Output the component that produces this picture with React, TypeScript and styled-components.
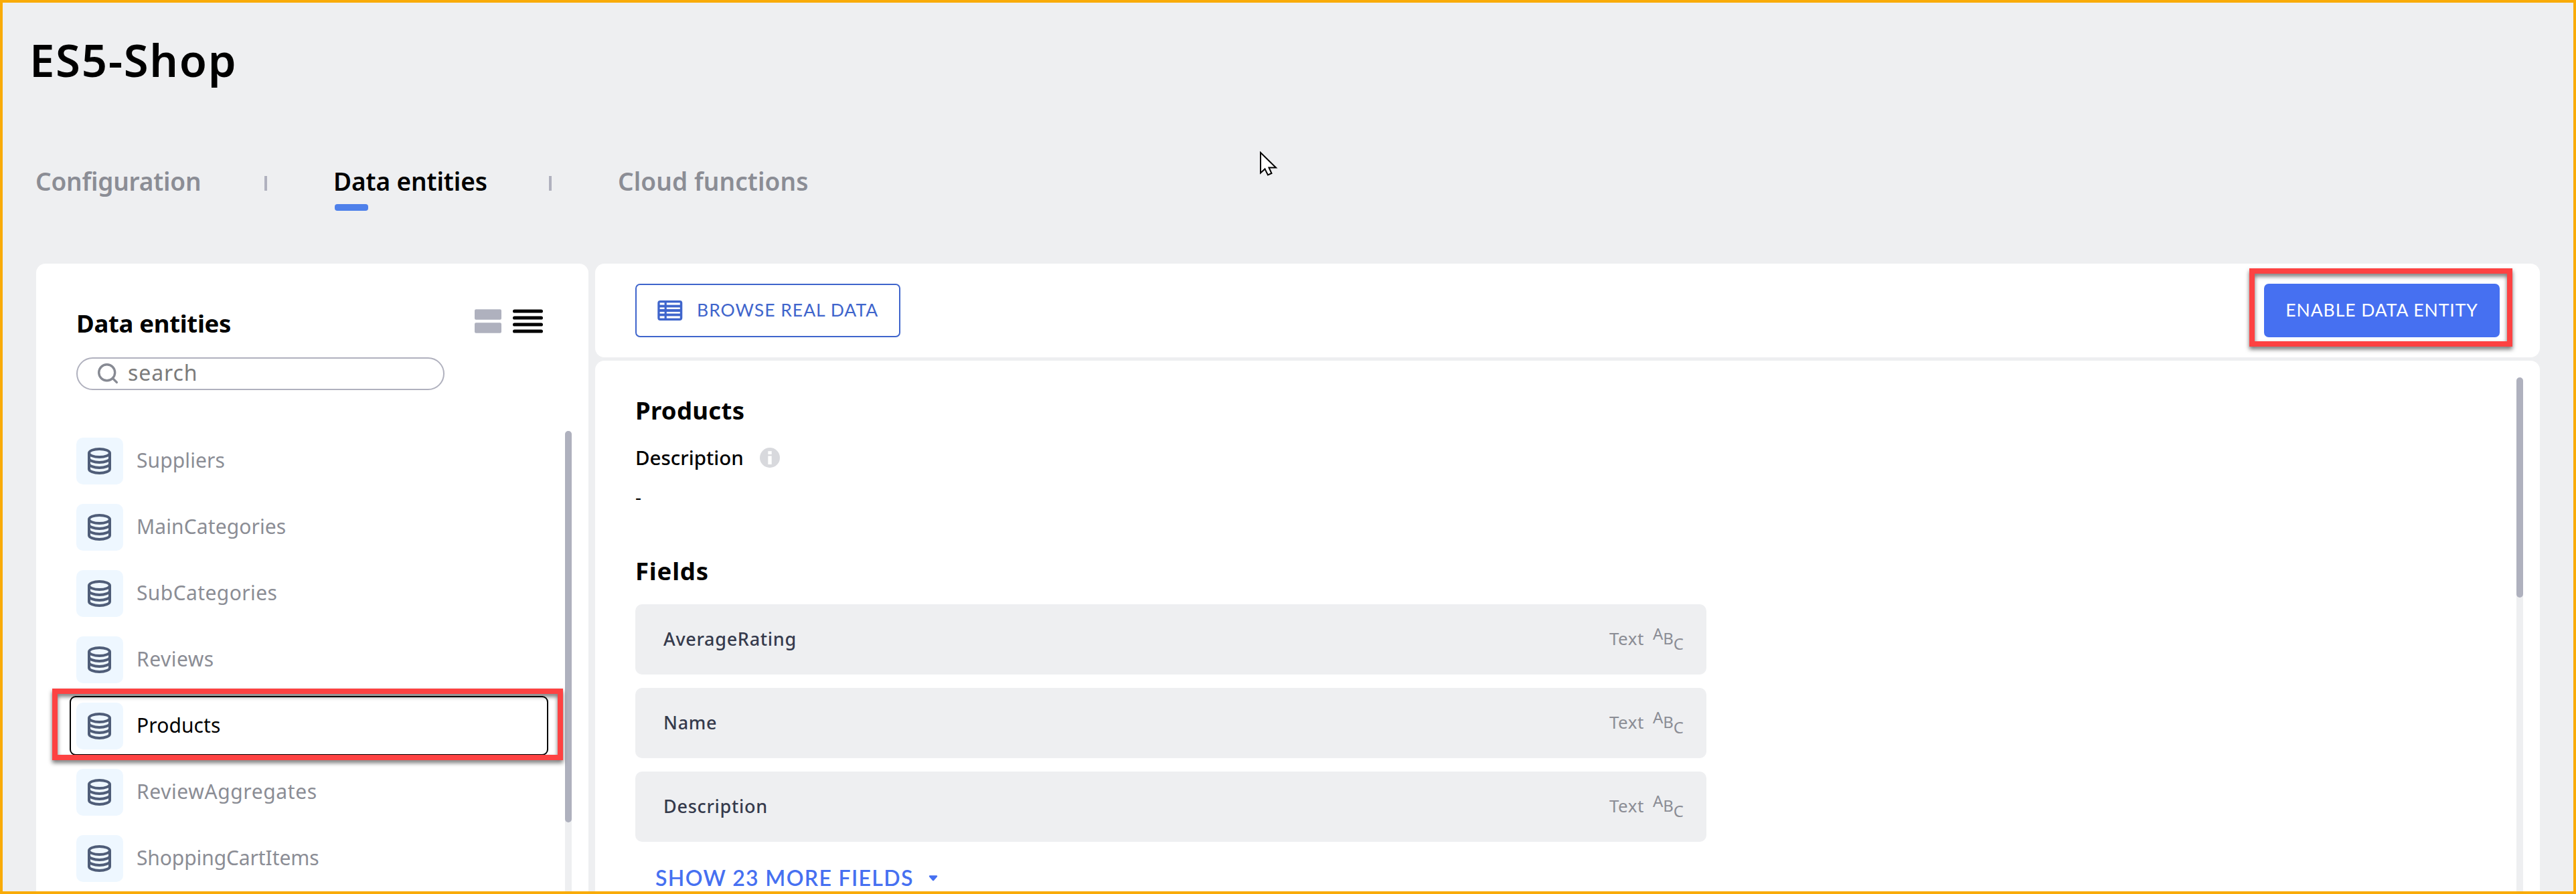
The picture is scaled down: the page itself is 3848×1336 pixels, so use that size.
import React from "react";
import styled, { createGlobalStyle, css } from "styled-components";

const color = {
  page: "#eeeff1",
  frame: "#f9ab08",
  muted: "#8b8d95",
  scroll: "#afb1be",
  primary: "#4670f1",
  outline: "#3f65cc",
  callout: "#fd4242",
  ink: "#353a4c",
};

const GlobalStyle = createGlobalStyle`
  * { box-sizing: border-box; }
  body {
    margin: 0;
    background: ${color.page};
    font-family: "Noto Sans", "Open Sans", sans-serif;
    color: #000;
  }
  h1, h2, p { margin: 0; }
  svg { display: block; flex: none; }
`;

const Frame = styled.div`
  position: relative;
  display: flex;
  flex-direction: column;
  width: 3848px;
  height: 1336px;
  padding: 45px 50px 0;
  border: 4px solid ${color.frame};
  background: ${color.page};
  overflow: hidden;
`;

const Title = styled.h1`
  margin-left: -10px;
  font-size: 67px;
  line-height: 80px;
  font-weight: 600;
  letter-spacing: 1.7px;
`;

const Tabs = styled.nav`
  display: flex;
  height: 69px;
  margin: 117px 0 79px -1px;
`;

const Tab = styled.div<{ $active?: boolean; $width: number; $tracking?: number }>`
  width: ${(p) => p.$width}px;
  font-size: 37px;
  line-height: 50px;
  font-weight: 560;
  letter-spacing: ${(p) => p.$tracking ?? 0}px;
  white-space: nowrap;
  color: ${(p) => (p.$active ? "#000" : color.muted)};
  ${(p) =>
    p.$active &&
    css`
      &::after {
        content: "";
        display: block;
        width: 50px;
        height: 10px;
        margin: 9px 0 0 2px;
        border-radius: 4px;
        background: #4e80ea;
      }
    `}
`;

const TabDivider = styled.span`
  width: 4px;
  height: 22px;
  margin: 17px 99px 0 0;
  background: #b0b1be;
`;

const Body = styled.div`
  display: flex;
  flex: 1;
  gap: 10px;
  min-height: 0;
`;

const Sidebar = styled.aside`
  display: flex;
  flex-direction: column;
  width: 825px;
  padding-top: 64px;
  border-radius: 14px 14px 0 0;
  background: #fff;
`;

const SidebarHeader = styled.div`
  display: flex;
  justify-content: space-between;
  height: 50px;
  padding: 0 68px 0 60px;
`;

const Heading = styled.h2<{ $tracking?: number }>`
  font-size: 36.5px;
  line-height: 50px;
  font-weight: 700;
  letter-spacing: ${(p) => p.$tracking ?? 0}px;
`;

const ViewSwitch = styled.div`
  display: flex;
  gap: 17px;
  padding-top: 4px;
`;

const SearchBox = styled.label`
  display: flex;
  align-items: center;
  gap: 14px;
  flex: none;
  width: 550px;
  height: 49px;
  margin: 26px 0 61px 60px;
  padding: 0 30px 1px;
  border: 2px solid #b0b1be;
  border-radius: 25px;
`;

const SearchText = styled.span`
  padding-bottom: 3px;
  font-size: 32px;
  line-height: 40px;
  letter-spacing: 0.9px;
  color: #7b7b7b;
`;

const ListArea = styled.div`
  display: flex;
  flex: 1;
  gap: 25px;
  min-height: 0;
  padding-left: 50px;
`;

const EntityList = styled.div`
  display: flex;
  flex-direction: column;
  gap: 9px;
  width: 715px;
`;

const EntityRow = styled.div<{ $selected?: boolean }>`
  position: relative;
  display: flex;
  align-items: center;
  gap: 20px;
  flex: none;
  height: 90px;
  padding: 0 10px;
  color: ${(p) => (p.$selected ? "#000" : color.muted)};
  ${(p) =>
    p.$selected &&
    css`
      &::after {
        content: "";
        position: absolute;
        inset: 0 0 1px;
        border: 2px solid #000;
        border-radius: 9px;
      }
    `}
`;

const EntityTile = styled.span`
  display: flex;
  align-items: center;
  justify-content: center;
  width: 70px;
  height: 70px;
  padding-right: 1px;
  border-radius: 10px;
  background: #eef7ff;
`;

const EntityName = styled.span<{ $tracking: number }>`
  padding-bottom: 2px;
  font-size: 30px;
  line-height: 40px;
  letter-spacing: ${(p) => p.$tracking}px;
`;

const Callout = styled.div<{ $x: number; $y: number; $w: number; $h: number }>`
  position: absolute;
  z-index: 1;
  left: ${(p) => p.$x}px;
  top: ${(p) => p.$y}px;
  width: ${(p) => p.$w}px;
  height: ${(p) => p.$h}px;
  border: 8px solid ${color.callout};
  filter: drop-shadow(0 4px 3px rgba(0, 0, 0, 0.55));
`;

const ScrollTrack = styled.div<{ $top?: number }>`
  width: 10px;
  margin-top: ${(p) => p.$top ?? 0}px;
  border-radius: 5px 5px 0 0;
  background: ${color.page};
`;

const ScrollThumb = styled.div<{ $length: number }>`
  height: ${(p) => p.$length}px;
  border-radius: 5px;
  background: ${color.scroll};
`;

const Main = styled.main`
  display: flex;
  flex-direction: column;
  flex: 1;
  gap: 5px;
`;

const Toolbar = styled.div`
  display: flex;
  align-items: center;
  justify-content: space-between;
  flex: none;
  height: 140px;
  padding: 0 60px;
  border-radius: 14px;
  background: #fff;
`;

const ButtonSlot = styled.div`
  position: relative;
`;

const Button = styled.button<{ $filled?: boolean; $width: number }>`
  display: flex;
  align-items: center;
  gap: 21px;
  justify-content: ${(p) => (p.$filled ? "center" : "flex-start")};
  width: ${(p) => p.$width}px;
  height: 80px;
  padding: 0 0 0 ${(p) => (p.$filled ? 0 : 31)}px;
  border: 2px solid ${(p) => (p.$filled ? color.primary : color.outline)};
  border-radius: 7px;
  background: ${(p) => (p.$filled ? color.primary : "#fff")};
  color: ${(p) => (p.$filled ? "#fff" : color.outline)};
  font-family: Lato, "Noto Sans", sans-serif;
  font-size: 26.5px;
  line-height: 40px;
  letter-spacing: ${(p) => (p.$filled ? 0.95 : 1)}px;
  white-space: nowrap;
`;

const ButtonLabel = styled.span`
  padding-bottom: 3px;
`;

const Content = styled.section`
  display: flex;
  justify-content: space-between;
  flex: 1;
  min-height: 0;
  padding: 0 25px 0 60px;
  border-radius: 14px 14px 0 0;
  background: #fff;
`;

const Details = styled.div`
  display: flex;
  flex-direction: column;
  width: 1600px;
  padding-top: 49px;
`;

const DescriptionLabel = styled.div`
  display: flex;
  align-items: center;
  gap: 24px;
  height: 40px;
  margin-top: 26px;
  font-size: 29.5px;
  line-height: 40px;
  font-weight: 500;
`;

const DescriptionText = styled.p`
  margin: 18px 0 66px;
  font-size: 28px;
  line-height: 40px;
`;

const FieldList = styled.div`
  display: flex;
  flex-direction: column;
  flex: none;
  gap: 20px;
  margin: 25px 0 32px;
`;

const FieldRow = styled.div`
  display: flex;
  align-items: center;
  justify-content: space-between;
  height: 105px;
  padding: 0 34px 0 42px;
  border-radius: 10px;
  background: ${color.page};
`;

const FieldName = styled.span`
  padding-bottom: 1px;
  font-size: 27px;
  line-height: 40px;
  font-weight: 500;
  letter-spacing: 0.7px;
  color: ${color.ink};
`;

const FieldType = styled.span`
  display: flex;
  align-items: center;
  gap: 13px;
  padding-bottom: 3px;
  font-size: 26px;
  line-height: 40px;
  letter-spacing: 0.5px;
  color: ${color.muted};
`;

const AbcMark = styled.span`
  display: flex;
  align-items: flex-start;
  height: 39px;
  font-size: 24px;
  line-height: 24px;
  letter-spacing: 0;
`;

const AbcLetter = styled.span<{ $drop: number }>`
  padding-top: ${(p) => p.$drop}px;
`;

const ShowMore = styled.div`
  display: flex;
  align-items: center;
  gap: 22px;
  flex: none;
  margin-left: 30px;
  font-family: Lato, "Noto Sans", sans-serif;
  font-size: 32px;
  line-height: 44px;
  font-weight: 600;
  letter-spacing: 1.35px;
  color: ${color.primary};
`;

const Pointer = styled.svg`
  position: absolute;
  left: 1877px;
  top: 222px;
`;

const DatabaseIcon = () => (
  <svg width="35" height="40" viewBox="0 0 35 40" fill="none" stroke="#4f5d78" strokeWidth="4">
    <ellipse cx="17.5" cy="8" rx="15.5" ry="6" />
    <path d="M2 8V32C2 35.3 9 38 17.5 38S33 35.3 33 32V8" />
    <path d="M2 16C2 19.3 9 22 17.5 22S33 19.3 33 16" />
    <path d="M2 24C2 27.3 9 30 17.5 30S33 27.3 33 24" />
  </svg>
);

const CardsIcon = () => (
  <svg width="40" height="36" viewBox="0 0 40 36" fill="#afb1be">
    <rect y="0.3" width="40" height="15.4" rx="2" />
    <rect y="20.3" width="40" height="15.4" rx="2" />
  </svg>
);

const LinesIcon = () => (
  <svg width="45" height="36" viewBox="0 0 45 36" fill="#000">
    {[0.4, 10.4, 20.4, 30.4].map((y) => (
      <rect key={y} y={y} width="45" height="5.2" rx="2.6" />
    ))}
  </svg>
);

const SearchIcon = () => (
  <svg width="31" height="31" viewBox="0 0 31 31" fill="none" stroke="#878a93" strokeWidth="3.4" strokeLinecap="round">
    <circle cx="13.7" cy="13.7" r="12" />
    <path d="M22.4 22.4L28.4 28.4" />
  </svg>
);

const TableIcon = () => (
  <svg width="38" height="30" viewBox="0 0 38 30">
    <rect x="0.3" width="37" height="30" rx="4" fill="#3f65cc" />
    <g fill="#fff">
      {[[3.4, 3.2], [10.4, 2.6], [17, 2.6], [23.4, 3.2]].map(([y, h]) => (
        <React.Fragment key={y}>
          <rect x="3.6" y={y} width="7" height={h} />
          <rect x="13.8" y={y} width="20" height={h} />
        </React.Fragment>
      ))}
    </g>
  </svg>
);

const InfoIcon = () => (
  <svg width="30" height="30" viewBox="0 0 30 30">
    <circle cx="15" cy="15" r="15" fill="#d8d9dd" />
    <rect x="12.3" y="5.2" width="5.4" height="4.8" fill="#fff" />
    <rect x="12.3" y="12.4" width="5.4" height="12.6" fill="#fff" />
  </svg>
);

const CaretIcon = () => (
  <svg width="14" height="9" viewBox="0 0 14 9">
    <path d="M2 1.5H12L7 7.2Z" fill="#4670f1" stroke="#4670f1" strokeWidth="2.4" strokeLinejoin="round" />
  </svg>
);

const entities = [
  { name: "Suppliers", tracking: 0.1 },
  { name: "MainCategories", tracking: 0.1 },
  { name: "SubCategories", tracking: 0.4 },
  { name: "Reviews", tracking: 0.5 },
  { name: "Products", tracking: 0.1, selected: true },
  { name: "ReviewAggregates", tracking: 0.6 },
  { name: "ShoppingCartItems", tracking: -0.1 },
];

const fields = ["AverageRating", "Name", "Description"];

export default function App() {
  return (
    <>
      <GlobalStyle />
      <Frame>
        <Title>ES5-Shop</Title>
        <Tabs>
          <Tab $width={342} $tracking={-0.2}>Configuration</Tab>
          <TabDivider />
          <Tab $width={322} $tracking={-0.1} $active>Data entities</Tab>
          <TabDivider />
          <Tab $width={300} $tracking={0.1}>Cloud functions</Tab>
        </Tabs>
        <Body>
          <Sidebar>
            <SidebarHeader>
              <Heading $tracking={-0.3}>Data entities</Heading>
              <ViewSwitch>
                <CardsIcon />
                <LinesIcon />
              </ViewSwitch>
            </SidebarHeader>
            <SearchBox>
              <SearchIcon />
              <SearchText>search</SearchText>
            </SearchBox>
            <ListArea>
              <EntityList>
                {entities.map((e) => (
                  <EntityRow key={e.name} $selected={e.selected}>
                    <EntityTile>
                      <DatabaseIcon />
                    </EntityTile>
                    <EntityName $tracking={e.tracking}>{e.name}</EntityName>
                    {e.selected && <Callout $x={-26} $y={-11} $w={763} $h={107} />}
                  </EntityRow>
                ))}
              </EntityList>
              <ScrollTrack>
                <ScrollThumb $length={585} />
              </ScrollTrack>
            </ListArea>
          </Sidebar>
          <Main>
            <Toolbar>
              <Button $width={396}>
                <TableIcon />
                <ButtonLabel>BROWSE REAL DATA</ButtonLabel>
              </Button>
              <ButtonSlot>
                <Button $filled $width={352}>
                  <ButtonLabel>ENABLE DATA ENTITY</ButtonLabel>
                </Button>
                <Callout $x={-22} $y={-23} $w={393} $h={117} />
              </ButtonSlot>
            </Toolbar>
            <Content>
              <Details>
                <Heading $tracking={0.3}>Products</Heading>
                <DescriptionLabel>
                  Description
                  <InfoIcon />
                </DescriptionLabel>
                <DescriptionText>-</DescriptionText>
                <Heading $tracking={0.8}>Fields</Heading>
                <FieldList>
                  {fields.map((name) => (
                    <FieldRow key={name}>
                      <FieldName>{name}</FieldName>
                      <FieldType>
                        Text
                        <AbcMark>
                          <AbcLetter $drop={0}>A</AbcLetter>
                          <AbcLetter $drop={7.5}>B</AbcLetter>
                          <AbcLetter $drop={15}>C</AbcLetter>
                        </AbcMark>
                      </FieldType>
                    </FieldRow>
                  ))}
                </FieldList>
                <ShowMore>
                  SHOW 23 MORE FIELDS
                  <CaretIcon />
                </ShowMore>
              </Details>
              <ScrollTrack $top={25}>
                <ScrollThumb $length={329} />
              </ScrollTrack>
            </Content>
          </Main>
        </Body>
        <Pointer width="30" height="40" viewBox="0 0 30 40">
          <path
            d="M2 2V32.5L8.5 26.5L13 35.5L18.5 33L14.5 24.5H25Z"
            fill="#fff"
            stroke="#000"
            strokeWidth="2"
          />
        </Pointer>
      </Frame>
    </>
  );
}
